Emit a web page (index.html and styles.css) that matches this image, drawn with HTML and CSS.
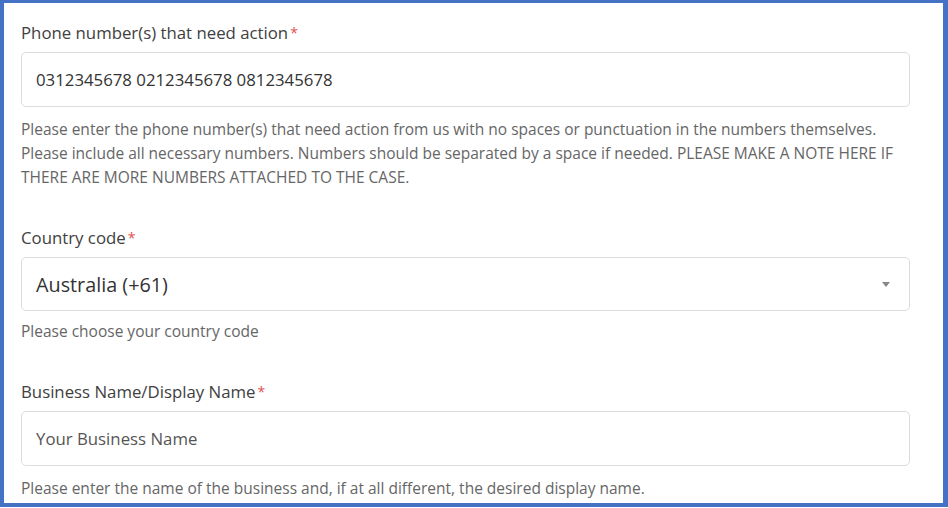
FILE: index.html
```html
<!DOCTYPE html>
<html lang="en">
<head>
  <meta charset="UTF-8">
  <title>Number action request</title>
  <link rel="stylesheet" href="styles.css">
</head>
<body>
  <div class="frame">
    <div class="group">
      <label class="label" for="phones">Phone number(s) that need action<span class="req">*</span></label>
      <input class="control" type="text" id="phones" value="0312345678 0212345678 0812345678">
      <p class="help">Please enter the phone number(s) that need action from us with no spaces or punctuation in the numbers themselves. Please include all necessary numbers. Numbers should be separated by a space if needed. PLEASE MAKE A NOTE HERE IF THERE ARE MORE NUMBERS ATTACHED TO THE CASE.</p>
    </div>

    <div class="group">
      <label class="label" for="country">Country code<span class="req">*</span></label>
      <div class="control select" id="country">
        <span class="select-value">Australia (+61)</span>
        <span class="caret"></span>
      </div>
      <p class="help help-short">Please choose your country code</p>
    </div>

    <div class="group">
      <label class="label" for="business">Business Name/Display Name<span class="req">*</span></label>
      <input class="control" type="text" id="business" placeholder="Your Business Name">
      <p class="help">Please enter the name of the business and, if at all different, the desired display name.</p>
    </div>
  </div>
</body>
</html>
```

FILE: styles.css
```css
body {
  margin: 0;
  padding: 0;
  background-color: white;
  font-family: "Open Sans", "Noto Sans", sans-serif;
  color: #333;
}
.frame {
  box-sizing: border-box;
  height: 507px;
  overflow: hidden;
  border-style: solid;
  border-color: #4472c4;
  border-width: 3px 5px 4px 4px;
  padding: 19px 33px 0 17px;
}
.group {
  margin-bottom: 38px;
}
.label {
  display: block;
  font-size: 16.8px;
  line-height: 22px;
  color: #404040;
  margin-bottom: 8px;
}
.req {
  color: #e35050;
  font-size: 14px;
  margin-left: 2px;
  vertical-align: top;
}
.control {
  box-sizing: border-box;
  display: block;
  width: 100%;
  height: 55px;
  margin: 0;
  padding: 0 14px;
  border: 1px solid #dcdcdc;
  border-radius: 5px;
  background-color: white;
  font-family: inherit;
  font-size: 16.8px;
  color: #333;
  outline: none;
}
.control::placeholder {
  color: #555;
}
.select {
  height: 54px;
  display: flex;
  align-items: center;
  justify-content: space-between;
  padding-right: 19px;
}
.select-value {
  font-size: 19.8px;
  color: #333;
}
.caret {
  width: 0;
  height: 0;
  border-left: 4px solid transparent;
  border-right: 4px solid transparent;
  border-top: 5px solid #888;
}
.help {
  margin: 10px 0 0;
  font-size: 15.5px;
  line-height: 24px;
  color: #666;
}
.help-short {
  margin-top: 8px;
}
```
